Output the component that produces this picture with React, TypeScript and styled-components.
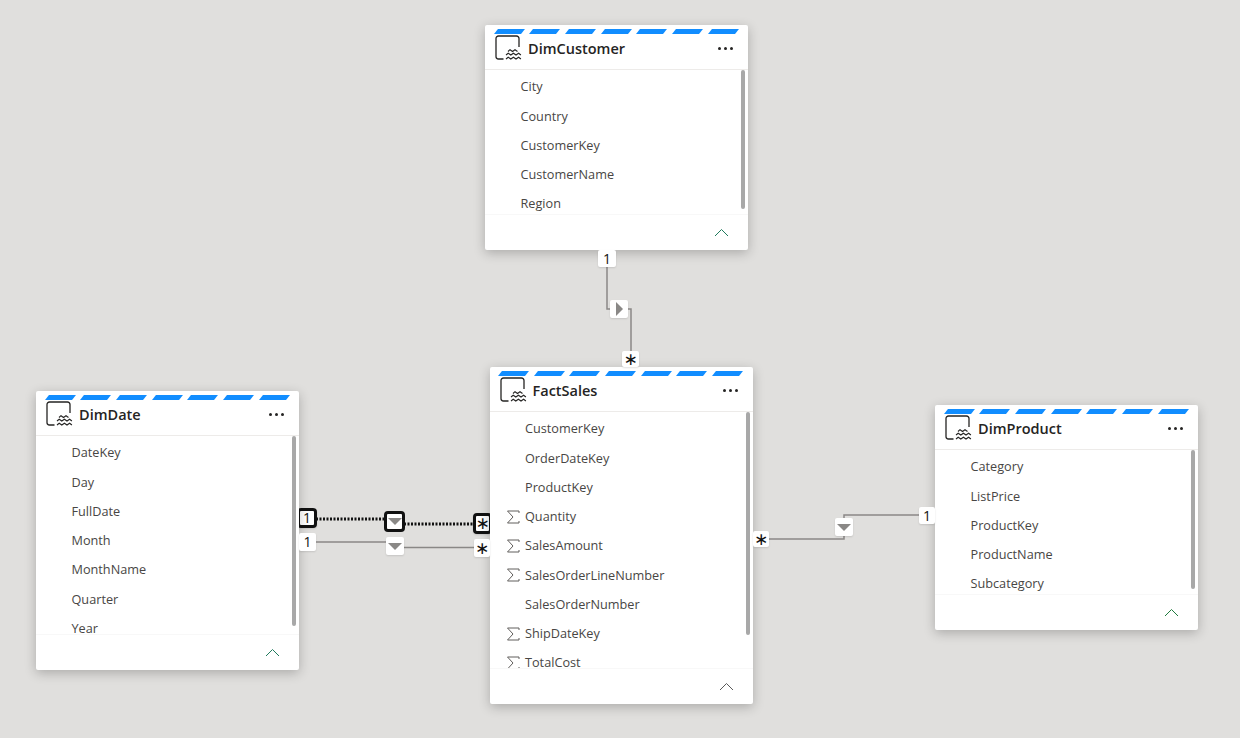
import styled, { createGlobalStyle } from "styled-components";

interface TableInfo {
  name: string;
  x: number;
  y: number;
  width: number;
  height: number;
  thumbHeight: number;
  chevron: string;
  columns: { name: string; sum?: boolean }[];
}

const tables: TableInfo[] = [
  {
    name: "DimCustomer",
    x: 485,
    y: 25,
    width: 263,
    height: 225,
    thumbHeight: 139,
    chevron: "#1f7a5c",
    columns: [
      { name: "City" },
      { name: "Country" },
      { name: "CustomerKey" },
      { name: "CustomerName" },
      { name: "Region" },
    ],
  },
  {
    name: "FactSales",
    x: 489.5,
    y: 367,
    width: 263,
    height: 337,
    thumbHeight: 223,
    chevron: "#5a5a5a",
    columns: [
      { name: "CustomerKey" },
      { name: "OrderDateKey" },
      { name: "ProductKey" },
      { name: "Quantity", sum: true },
      { name: "SalesAmount", sum: true },
      { name: "SalesOrderLineNumber", sum: true },
      { name: "SalesOrderNumber" },
      { name: "ShipDateKey", sum: true },
      { name: "TotalCost", sum: true },
    ],
  },
  {
    name: "DimDate",
    x: 36,
    y: 391,
    width: 263,
    height: 279,
    thumbHeight: 190,
    chevron: "#1f7a5c",
    columns: [
      { name: "DateKey" },
      { name: "Day" },
      { name: "FullDate" },
      { name: "Month" },
      { name: "MonthName" },
      { name: "Quarter" },
      { name: "Year" },
    ],
  },
  {
    name: "DimProduct",
    x: 935,
    y: 405,
    width: 263,
    height: 225,
    thumbHeight: 139,
    chevron: "#1f7a3d",
    columns: [
      { name: "Category" },
      { name: "ListPrice" },
      { name: "ProductKey" },
      { name: "ProductName" },
      { name: "Subcategory" },
    ],
  },
];

const badges = [
  { x: 598, y: 250, w: 18, h: 17, text: "1" },
  { x: 622, y: 351, w: 17, h: 16, text: "∗" },
  { x: 299, y: 533, w: 17, h: 18, text: "1" },
  { x: 474, y: 539, w: 16, h: 18, text: "∗" },
  { x: 753, y: 531, w: 16, h: 16, text: "∗" },
  { x: 919, y: 507, w: 16, h: 17, text: "1" },
];

const arrows = [
  { x: 610, y: 300, dir: "right" },
  { x: 386, y: 537, dir: "down" },
  { x: 835, y: 518, dir: "down" },
];

function ModelIcon() {
  return (
    <svg width="28" height="26" viewBox="0 0 28 26" fill="none" stroke="#252423" strokeWidth="1.3">
      <path d="M8.500 24H3.500A2.500 2.500 0 0 1 1 21.500V3.500A2.500 2.500 0 0 1 3.500 1H21.500A2.500 2.500 0 0 1 24 3.500V12" />
      <path d="M13 16.500l2-1.800 2.500 1.800 2.500-1.800 2.500 1.800" strokeWidth="1.100" />
      <path d="M11 20l2.200-1.800 2.600 1.800 2.600-1.800 2.600 1.800 2.600-1.800 2.300 1.800" strokeWidth="1.100" />
      <path d="M11 24l2.200-1.800 2.600 1.800 2.600-1.800 2.600 1.800 2.600-1.800 2.300 1.800" strokeWidth="1.100" />
    </svg>
  );
}

function SumIcon() {
  return (
    <svg width="14" height="14" viewBox="0 0 14 14" fill="none" stroke="#605e5c" strokeWidth="1">
      <path d="M13 3V1H1.500L7 7 1.500 13H13v-2" />
    </svg>
  );
}

function Table({ table }: { table: TableInfo }) {
  return (
    <Card $x={table.x} $y={table.y} $w={table.width} $h={table.height}>
      <Stripes>
        {Array.from({ length: 7 }).map((_, i) => (
          <Stripe key={i} />
        ))}
      </Stripes>
      <Header>
        <ModelIcon />
        <Title>{table.name}</Title>
        <More>
          <i />
          <i />
          <i />
        </More>
      </Header>
      <Body>
        <Rows>
          {table.columns.map((col) => (
            <Row key={col.name}>
              <SumSlot>{col.sum && <SumIcon />}</SumSlot>
              {col.name}
            </Row>
          ))}
        </Rows>
        <Thumb $h={table.thumbHeight} />
      </Body>
      <Footer>
        <svg width="15" height="9" viewBox="0 0 15 9" fill="none">
          <path d="M1 8l6.500-6.500L14 8" stroke={table.chevron} strokeWidth="1" />
        </svg>
      </Footer>
    </Card>
  );
}

export default function App() {
  return (
    <Canvas>
      <GlobalStyle />
      <Lines width="1240" height="738">
        <g fill="none" stroke="#8a8886" strokeWidth="1.500">
          <path d="M607 267V309H611M627 309H631V351" />
          <path d="M316 542H387M403 547.500H475" />
          <path d="M769 539H844V535M844 519V515H920" />
        </g>
        <g fill="none" stroke="#111" strokeWidth="3" strokeDasharray="2 1.500">
          <path d="M316 519H386M404 524H474" />
        </g>
      </Lines>
      <ActiveBadge $x={297} $y={508} $w={20} $h={20}>1</ActiveBadge>
      <ActiveBadge $x={473} $y={513} $w={19} $h={21} $star>∗</ActiveBadge>
      {tables.map((t) => (
        <Table key={t.name} table={t} />
      ))}
      {badges.map((b) => (
        <Badge key={`${b.x}-${b.y}`} $x={b.x} $y={b.y} $w={b.w} $h={b.h} $star={b.text === "∗"}>
          {b.text}
        </Badge>
      ))}
      {arrows.map((a) => (
        <ArrowBox key={a.x} $x={a.x} $y={a.y}>
          <Triangle $dir={a.dir} />
        </ArrowBox>
      ))}
      <ActiveArrow>
        <Triangle $dir="down" />
      </ActiveArrow>
    </Canvas>
  );
}

const GlobalStyle = createGlobalStyle`
  html, body {
    margin: 0;
    padding: 0;
    background: #e0dfdd;
  }
`;

const Canvas = styled.div`
  position: relative;
  width: 1240px;
  height: 738px;
  overflow: hidden;
  background: #e0dfdd;
  font-family: "Open Sans", "Noto Sans", sans-serif;
`;

const Lines = styled.svg`
  position: absolute;
  left: 0;
  top: 0;
`;

const Card = styled.div<{ $x: number; $y: number; $w: number; $h: number }>`
  position: absolute;
  left: ${(p) => p.$x}px;
  top: ${(p) => p.$y}px;
  width: ${(p) => p.$w}px;
  height: ${(p) => p.$h}px;
  display: flex;
  flex-direction: column;
  background: #fff;
  border-radius: 2px;
  box-shadow: 0 3px 12px rgba(0, 0, 0, 0.24);
`;

const Stripes = styled.div`
  display: flex;
  gap: 8.700px;
  padding: 4px 0 0 10.500px;
  height: 5px;
  flex: none;
`;

const Stripe = styled.div`
  width: 27px;
  height: 5px;
  background: #118dff;
  transform: skewX(-38deg);
`;

const Header = styled.div`
  display: flex;
  align-items: center;
  height: 28px;
  flex: none;
  padding: 0 15px 7px 10px;
  gap: 5px;
  border-bottom: 1px solid #edebe9;
`;

const Title = styled.div`
  flex: 1;
  font-size: 14.500px;
  font-weight: 600;
  color: #252423;
`;

const More = styled.div`
  display: flex;
  gap: 3px;
  i {
    display: block;
    width: 3px;
    height: 3px;
    border-radius: 50%;
    background: #252423;
  }
`;

const Body = styled.div`
  position: relative;
  flex: 1;
  min-height: 0;
  overflow: hidden;
`;

const Rows = styled.div`
  padding-top: 2.200px;
`;

const Row = styled.div`
  display: flex;
  align-items: center;
  height: 29.250px;
  padding-left: 16px;
  font-size: 12.700px;
  line-height: 1;
  color: #484644;
`;

const SumSlot = styled.span`
  display: flex;
  align-items: center;
  width: 19.500px;
  flex: none;
`;

const Thumb = styled.div<{ $h: number }>`
  position: absolute;
  right: 3px;
  top: 0;
  width: 4px;
  height: ${(p) => p.$h}px;
  border-radius: 2px;
  background: #a8a8a8;
`;

const Footer = styled.div`
  display: flex;
  align-items: center;
  justify-content: flex-end;
  height: 35px;
  flex: none;
  padding-right: 19px;
  border-top: 1px solid #f8f8f8;
`;

const Badge = styled.div<{ $x: number; $y: number; $w: number; $h: number; $star?: boolean }>`
  position: absolute;
  left: ${(p) => p.$x}px;
  top: ${(p) => p.$y}px;
  width: ${(p) => p.$w}px;
  height: ${(p) => p.$h}px;
  display: flex;
  align-items: center;
  justify-content: center;
  background: #fff;
  border-radius: 2px;
  color: #111;
  font-family: ${(p) => (p.$star ? '"DejaVu Sans"' : '"Open Sans"')}, sans-serif;
  font-size: ${(p) => (p.$star ? 17 : 14)}px;
  line-height: 1;
  box-shadow: 0 1px 2px rgba(0, 0, 0, 0.12);
`;

const ActiveBadge = styled(Badge)`
  box-sizing: border-box;
  border: 3px solid #111;
  border-radius: 4px;
`;

const ArrowBox = styled.div<{ $x: number; $y: number }>`
  position: absolute;
  left: ${(p) => p.$x}px;
  top: ${(p) => p.$y}px;
  width: 18px;
  height: 18px;
  display: flex;
  align-items: center;
  justify-content: center;
  background: #fff;
  border-radius: 2px;
  box-shadow: 0 1px 2px rgba(0, 0, 0, 0.12);
`;

const ActiveArrow = styled.div`
  position: absolute;
  left: 384px;
  top: 511px;
  width: 21px;
  height: 21px;
  box-sizing: border-box;
  display: flex;
  align-items: center;
  justify-content: center;
  background: #fff;
  border: 3px solid #111;
  border-radius: 4px;
`;

const Triangle = styled.div<{ $dir: string }>`
  width: 0;
  height: 0;
  ${(p) =>
    p.$dir === "right"
      ? `border-top: 7px solid transparent;
         border-bottom: 7px solid transparent;
         border-left: 7px solid #8a8886;`
      : `border-left: 7px solid transparent;
         border-right: 7px solid transparent;
         border-top: 7px solid #8a8886;`}
`;
